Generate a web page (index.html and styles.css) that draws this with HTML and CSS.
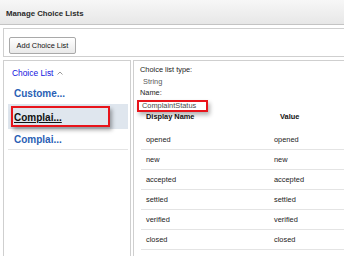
FILE: index.html
```html
<!DOCTYPE html>
<html>
<head>
<meta charset="utf-8">
<link rel="stylesheet" href="styles.css">
</head>
<body>
<div class="header">Manage Choice Lists</div>
<div class="toolbar">
  <button class="btn">Add Choice List</button>
</div>
<div class="main">
  <div class="left">
    <div class="left-title">Choice List <svg class="chev" width="6" height="4" viewBox="0 0 6 4"><polyline points="0.5,3.5 3,1 5.5,3.5" fill="none" stroke="#9a9a9a" stroke-width="1"/></svg></div>
    <ul class="list">
      <li class="item">Custome...</li>
      <li class="item selected"><span class="hl">Complai...</span></li>
      <li class="item last">Complai...</li>
    </ul>
  </div>
  <div class="right">
    <div class="label first">Choice list type:</div>
    <div class="value">String</div>
    <div class="label">Name:</div>
    <div class="value boxed">ComplaintStatus</div>
    <table class="tbl">
      <thead>
        <tr><th class="c1">Display Name</th><th class="c2">Value</th></tr>
      </thead>
      <tbody>
        <tr><td class="c1">opened</td><td class="c2">opened</td></tr>
        <tr><td class="c1">new</td><td class="c2">new</td></tr>
        <tr><td class="c1">accepted</td><td class="c2">accepted</td></tr>
        <tr><td class="c1">settled</td><td class="c2">settled</td></tr>
        <tr><td class="c1">verified</td><td class="c2">verified</td></tr>
        <tr><td class="c1">closed</td><td class="c2">closed</td></tr>
      </tbody>
    </table>
  </div>
</div>
</body>
</html>
```
FILE: styles.css
```css
html, body {
  margin: 0;
  padding: 0;
  background: #fff;
  overflow: hidden;
  font-family: "Liberation Sans", Arial, sans-serif;
}
.header {
  height: 24px;
  line-height: 27px;
  padding-left: 6px;
  font-size: 7.8px;
  font-weight: bold;
  color: #2a2a2a;
  background: linear-gradient(#f7f7f7, #e7e7e7);
  border-bottom: 1px solid #c4c4c4;
}
.toolbar {
  margin: 3px 0 3px 3px;
  border: 1px solid #cfcfcf;
  border-right: none;
  box-sizing: content-box;
  padding: 5px 0 0 5px;
  height: 22px;
}
.btn {
  height: 17px;
  width: 67px;
  padding: 0;
  margin: 0;
  font-family: "Liberation Sans", Arial, sans-serif;
  font-size: 7.4px;
  color: #111;
  background: linear-gradient(#ffffff, #e9e9e9);
  border: 1px solid #a9a9a9;
  border-radius: 2px;
}
.main {
  display: flex;
  gap: 2px;
  padding-left: 3px;
}
.left {
  width: 126px;
  height: 200px;
  border: 1px solid #cfcfcf;
  flex: none;
}
.left-title {
  height: 23px;
  line-height: 25px;
  padding-left: 8px;
  font-size: 8.4px;
  color: #1212e0;
}
.chev {
  vertical-align: 1px;
  margin-left: 1px;
}
.list {
  list-style: none;
  margin: 0 2px 0 4px;
  padding: 0;
}
.item {
  height: 20px;
  line-height: 20px;
  padding-left: 6px;
  font-size: 10px;
  font-weight: bold;
  color: #2a5fb5;
}
.item.selected {
  height: 25px;
  background: #dfe6ee;
  padding-left: 3px;
  padding-top: 2px;
  box-sizing: border-box;
}
.hl {
  display: block;
  width: 99px;
  height: 21px;
  line-height: 19px;
  border: 2px solid #e8141b;
  box-sizing: border-box;
  padding-left: 1px;
  color: #111;
  text-decoration: underline;
  box-shadow: 2px 3px 4px rgba(0, 0, 0, 0.35);
}
.item.last {
  border-bottom: 1px solid #e4e4e4;
  height: 20px;
  line-height: 21px;
}
.right {
  flex: 1;
  height: 200px;
  border: 1px solid #cfcfcf;
  border-right: none;
  padding-left: 6px;
  font-size: 7.4px;
  color: #222;
}
.label {
  height: 11px;
  line-height: 11px;
}
.label.first {
  margin-top: 3px;
  height: 12px;
  line-height: 12px;
}
.value {
  height: 11px;
  line-height: 11px;
  padding-left: 3px;
  color: #5a5a5a;
}
.value.boxed {
  margin: 2px 0 0 -3px;
  width: 71px;
  height: 12px;
  line-height: 8px;
  border: 2px solid #e8141b;
  box-sizing: border-box;
  padding-left: 3px;
  color: #4a4a4a;
  box-shadow: 2px 3px 4px rgba(0, 0, 0, 0.3);
}
.tbl {
  border-collapse: collapse;
  margin-left: 1px;
  width: 210px;
}
.tbl th {
  height: 18px;
  line-height: 10px;
  vertical-align: top;
  padding: 0 0 0 5px;
  text-align: left;
  font-weight: bold;
  color: #111;
}
.tbl th.c2 {
  padding-left: 11px;
}
.tbl td {
  height: 19px;
  padding: 0 0 0 5px;
  border-bottom: 1px solid #e4e4e4;
  color: #222;
}
.tbl .c1 {
  width: 123px;
}
```
